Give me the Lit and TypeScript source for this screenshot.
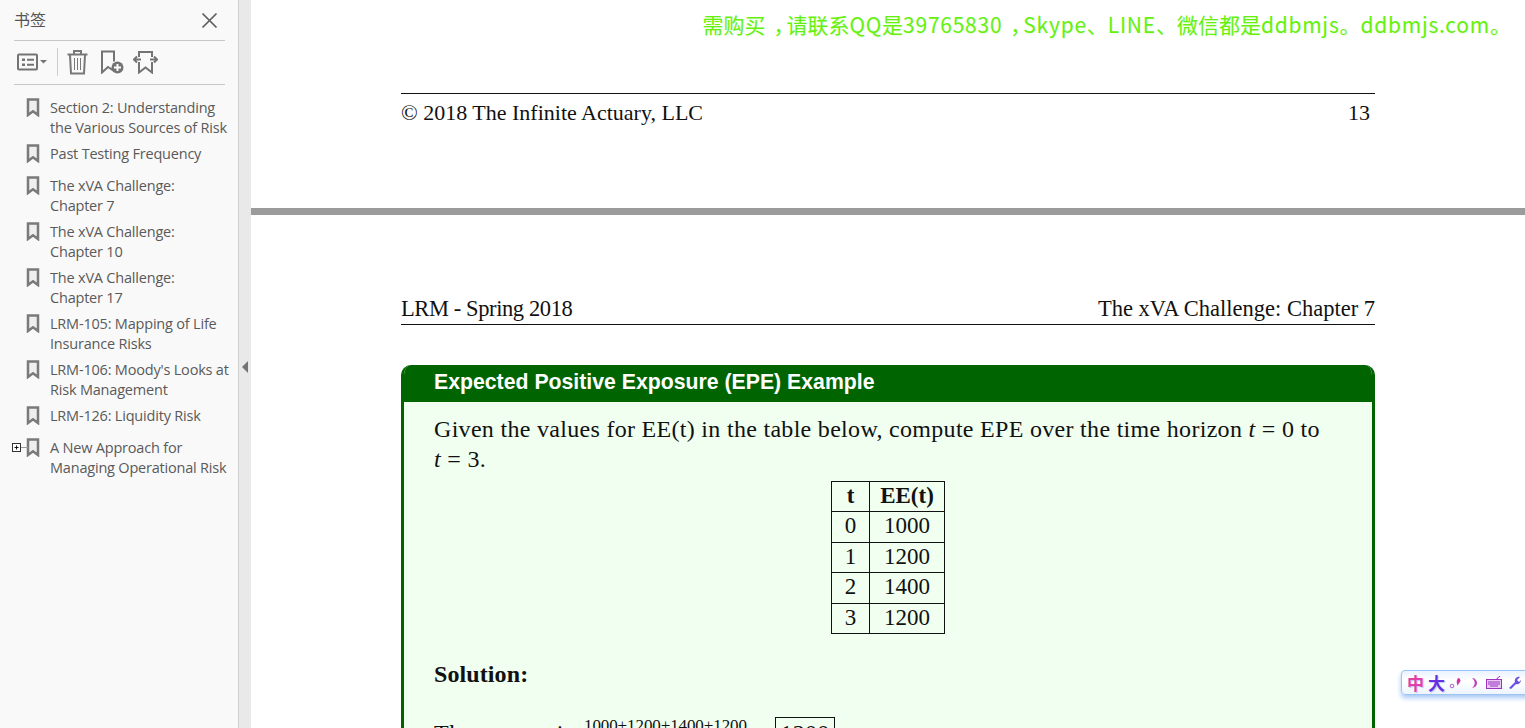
import { LitElement, html, css, svg } from "lit";
import { customElement } from "lit/decorators.js";

const bookmarks: { lines: string[]; gap?: boolean; expand?: boolean }[] = [
  { lines: ["Section 2: Understanding", "the Various Sources of Risk"] },
  { lines: ["Past Testing Frequency"] },
  { lines: ["The xVA Challenge:", "Chapter 7"], gap: true },
  { lines: ["The xVA Challenge:", "Chapter 10"] },
  { lines: ["The xVA Challenge:", "Chapter 17"] },
  { lines: ["LRM-105: Mapping of Life", "Insurance Risks"] },
  { lines: ["LRM-106: Moody's Looks at", "Risk Management"] },
  { lines: ["LRM-126: Liquidity Risk"] },
  { lines: ["A New Approach for", "Managing Operational Risk"], gap: true, expand: true },
];

const rows = [
  ["0", "1000"],
  ["1", "1200"],
  ["2", "1400"],
  ["3", "1200"],
];

const markIcon = svg`<path d="M2 1.500h10v15.500l-5-3.800-5 3.800z" fill="#efefef" stroke="#7a7a7a" stroke-width="2.500" stroke-linejoin="miter"/>`;

@customElement("app-root")
export class AppRoot extends LitElement {
  static styles = css`
    :host { display: flex; width: 1525px; height: 728px; overflow: hidden; position: relative; background: #fff; }
    .side { width: 239px; flex: none; background: #f9f9f9; border-right: 1px solid #cfcfcf; display: flex; flex-direction: column; padding: 0 13px 0 14px; box-sizing: border-box; font-family: "Open Sans", "Noto Sans CJK SC", sans-serif; color: #5c5c5c; }
    .head { height: 40px; flex: none; display: flex; align-items: center; justify-content: space-between; border-bottom: 1px solid #c8c8c8; padding: 0 7px 0 0; font: 16px "Noto Sans CJK SC", sans-serif; color: #555; }
    .head span { margin-bottom: 3px; }
    .head svg { display: block; }
    .tools { height: 41px; padding-bottom: 2px; flex: none; display: flex; align-items: center; border-bottom: 1px solid #c8c8c8; padding-left: 3px; }
    .tools svg { display: block; flex: none; }
    .sep { width: 1px; height: 28px; background: #cdcdcd; margin: 0 9px 0 10px; }
    .t2 { margin-left: 13px; }
    .t3 { margin-left: 9px; }
    .list { display: flex; flex-direction: column; gap: 6px; padding-top: 13px; margin-right: -13px; }
    .item { display: flex; position: relative; padding-left: 12px; }
    .item.gap { margin-top: 6px; }
    .mark { display: block; flex: none; width: 14px; height: 19px; }
    .label { margin-left: 10px; font-size: 14.5px; line-height: 20px; letter-spacing: -0.2px; white-space: nowrap; color: #5a5a5a; }
    .label div { height: 20px; }
    .plus { position: absolute; left: -2px; top: 5px; }
    .strip { width: 12px; flex: none; background: #e9e9e9; display: flex; align-items: center; justify-content: flex-start; padding: 6px 0 0 3px; box-sizing: border-box; }
    .tri { width: 0; height: 0; border-style: solid; border-width: 6px 6px 6px 0; border-color: transparent #747474 transparent transparent; }
    .main { flex: 1; min-width: 0; display: flex; flex-direction: column; font-family: "Liberation Serif", serif; color: #111; }
    .sheet1 { height: 208px; flex: none; padding: 0 150px; box-sizing: border-box; display: flex; flex-direction: column; position: relative; }
    .water { height: 93px; flex: none; text-align: right; font: 21px/49px "Noto Sans CJK SC", sans-serif; color: #66f010; white-space: nowrap; margin-right: -136px; text-shadow: 0 1px 2px rgba(102, 240, 16, 0.15); }
    .lat { letter-spacing: 0.75px; }
    .cm { padding-left: 8px; letter-spacing: -8px; }
    .foot { border-top: 1px solid #111; display: flex; justify-content: space-between; padding: 6px 5px 0 0; font-size: 22px; line-height: 26px; }
    .divide { height: 7px; flex: none; background: #9b9b9b; }
    .sheet2 { flex: 1; min-height: 0; padding: 79px 150px 0; box-sizing: border-box; display: flex; flex-direction: column; overflow: hidden; }
    .runhead { display: flex; justify-content: space-between; border-bottom: 1px solid #111; height: 31px; flex: none; font-size: 22.5px; line-height: 30px; box-sizing: border-box; }
    .rl { letter-spacing: -0.4px; }
    .card { margin-top: 40px; flex: none; border-radius: 10px 10px 0 0; overflow: hidden; border: solid #006400; border-width: 0 3px; background: #f0fff0; height: 420px; }
    .title { height: 37px; margin: 0 -3px; background: #006400; color: #fff; font: bold 21.250px/35px "Liberation Sans", sans-serif; padding-left: 33px; }
    .body { padding: 12px 30px 0; font-size: 24px; line-height: 30px; letter-spacing: 0.3px; }
    .body p { margin: 0; }
    .body i { font-style: italic; }
    .tbl { border-collapse: collapse; margin: 7px auto 0; font-size: 23px; line-height: 27.400px; text-align: center; letter-spacing: 0; }
    .tbl td, .tbl th { border: 1px solid #111; padding: 0 0 2px; }
    .c1 { width: 37px; }
    .c2 { width: 74px; }
    .sol { margin-top: 25px; padding-top: 25px; font-weight: bold; line-height: 30px; letter-spacing: 0.1px; }
    .formula { display: flex; align-items: flex-start; margin-top: 28px; height: 40px; }
    .the { width: 150px; flex: none; letter-spacing: 0.5px; white-space: nowrap; padding-top: 1px; }
    .frac { width: 191px; flex: none; font-size: 17px; line-height: 18px; letter-spacing: -0.1px; white-space: nowrap; }
    .boxed { border: 1px solid #111; width: 58px; text-align: center; line-height: 30px; }
    .ime { position: absolute; right: -6px; top: 670px; width: 130px; height: 25px; box-sizing: border-box; display: flex; align-items: center; gap: 4px; padding-left: 5px; border: 1px solid #9cc4f2; border-radius: 4px; background: linear-gradient(#eaf3ff, #fff 40%, #eef5ff); box-shadow: 0 3px 5px #a8c8f4; font: bold 17px/20px "Noto Sans CJK SC", sans-serif; text-shadow: 1px 1px 1px #b8ccf0; }
    .zhong { color: #e23fa8; }
    .da { color: #6a2fe0; }
    .ime svg { display: block; flex: none; }
    .moon { margin-left: 2px; }
    .kb { margin-left: 3px; }
    .wr { margin-left: 2px; }
  `;

  render() {
    return html`
      <aside class="side">
        <div class="head">
          <span>书签</span>
          <svg width="17" height="17" viewBox="0 0 17 17"><path d="M1.500 1.500l14 14M15.500 1.500l-14 14" stroke="#5e5e5e" stroke-width="1.700" fill="none"/></svg>
        </div>
        <div class="tools">
          <svg width="30" height="20" viewBox="0 0 30 20" fill="none">
            <rect x="1" y="2.500" width="19" height="15" rx="1" stroke="#747474" stroke-width="2"/>
            <path d="M5 6.500h3v2.500h-3zM5 11.500h3v2.500h-3z" fill="#747474"/>
            <path d="M10 7.700h7M10 12.700h7" stroke="#747474" stroke-width="2"/>
            <path d="M23 8h7l-3.500 3.500z" fill="#747474"/>
          </svg>
          <div class="sep"></div>
          <svg width="21" height="26" viewBox="0 0 21 26" fill="none" stroke="#787878">
            <path d="M0.500 5.500h20" stroke-width="2"/>
            <path d="M7 5v-3h7v3" stroke-width="2"/>
            <path d="M3 6l1 18.500h13l1-18.500" stroke-width="2"/>
            <path d="M7.500 9v12M10.500 9v12M13.500 9v12" stroke-width="1"/>
          </svg>
          <svg class="t2" width="23" height="24" viewBox="0 0 23 24" fill="none">
            <path d="M13 21l-6-4-6 5.500v-21h12v10" stroke="#747474" stroke-width="2"/>
            <circle cx="16.500" cy="17.500" r="6" fill="#747474"/>
            <path d="M13 17.500h7M16.500 14v7" stroke="#fff" stroke-width="2"/>
          </svg>
          <svg class="t3" width="25" height="24" viewBox="0 0 25 24" fill="none" stroke="#747474" stroke-width="2">
            <path d="M6 7v-5h13v5M6 12v10.500l6.500-5 6.500 5v-10.500"/>
            <path d="M1 9.500h7M17 9.500h7"/>
            <path d="M4 6.500l-3 3 3 3M21 6.500l3 3-3 3"/>
          </svg>
        </div>
        <div class="list">
          ${bookmarks.map(
            (b) => html`<div class="item ${b.gap ? "gap" : ""}">
              ${b.expand
                ? html`<svg class="plus" width="16" height="10" viewBox="0 0 16 10" fill="none">
                    <rect x="0.500" y="0.500" width="8" height="8" stroke="#333" fill="#fff"/>
                    <path d="M2.500 4.500h4M4.500 2.500v4" stroke="#111"/>
                    <path d="M9 4.500h7" stroke="#999"/>
                  </svg>`
                : ""}
              <svg class="mark" viewBox="0 0 14 19">${markIcon}</svg>
              <div class="label">${b.lines.map((l) => html`<div>${l}</div>`)}</div>
            </div>`
          )}
        </div>
      </aside>
      <div class="strip"><div class="tri"></div></div>
      <main class="main">
        <section class="sheet1">
          <div class="water">需购买<span class="cm">，</span>请联系<span class="lat">QQ</span>是<span class="lat">39765830</span><span class="cm">，</span><span class="lat">Skype</span>、<span class="lat">LINE</span>、微信都是<span class="lat">ddbmjs</span>。<span class="lat">ddbmjs.com</span>。</div>
          <div class="foot"><span>© 2018 The Infinite Actuary, LLC</span><span>13</span></div>
        </section>
        <div class="divide"></div>
        <section class="sheet2">
          <div class="runhead"><span class="rl">LRM - Spring 2018</span><span>The xVA Challenge: Chapter 7</span></div>
          <div class="card">
            <div class="title">Expected Positive Exposure (EPE) Example</div>
            <div class="body">
              <p>Given the values for EE(t) in the table below, compute EPE over the time horizon <i>t</i> = 0 to<br /><i>t</i> = 3.</p>
              <table class="tbl">
                <tr><th class="c1">t</th><th class="c2">EE(t)</th></tr>
                ${rows.map((r) => html`<tr><td>${r[0]}</td><td>${r[1]}</td></tr>`)}
              </table>
              <p class="sol">Solution:</p>
              <div class="formula">
                <span class="the">The answer is</span>
                <span class="frac">1000+1200+1400+1200</span>
                <span class="boxed">1200</span>
              </div>
            </div>
          </div>
        </section>
      </main>
      <div class="ime">
        <span class="zhong">中</span><span class="da">大</span>
        <svg width="14" height="12" viewBox="0 0 14 12"><circle cx="3" cy="9" r="1.800" fill="none" stroke="#b060d0"/><path d="M9 1a2.500 2.500 0 0 1 2 4l-3 4c1-2-1-3 0-6z" fill="#d030b0"/></svg>
        <svg class="moon" width="10" height="12" viewBox="0 0 10 12"><path d="M3 1a5 5 0 0 1 0 10 6 6 0 0 0 0-10z" fill="#c040b0"/></svg>
        <svg class="kb" width="16" height="13" viewBox="0 0 16 13"><rect x="0.500" y="3.500" width="15" height="9" fill="#e8c8f4" stroke="#a030c0"/><path d="M2 6h12M2 8h12M4 10h8" stroke="#a030c0"/><path d="M11 3c0-2 2-1 3-3" stroke="#a030c0" fill="none"/></svg>
        <svg class="wr" width="13" height="13" viewBox="0 0 13 13"><path d="M1 12l6-6c-1-3 2-6 5-5l-3 3 2 2 2-2c0 3-3 5-5 4l-5 5z" fill="#6a50e0"/></svg>
      </div>
    `;
  }
}
